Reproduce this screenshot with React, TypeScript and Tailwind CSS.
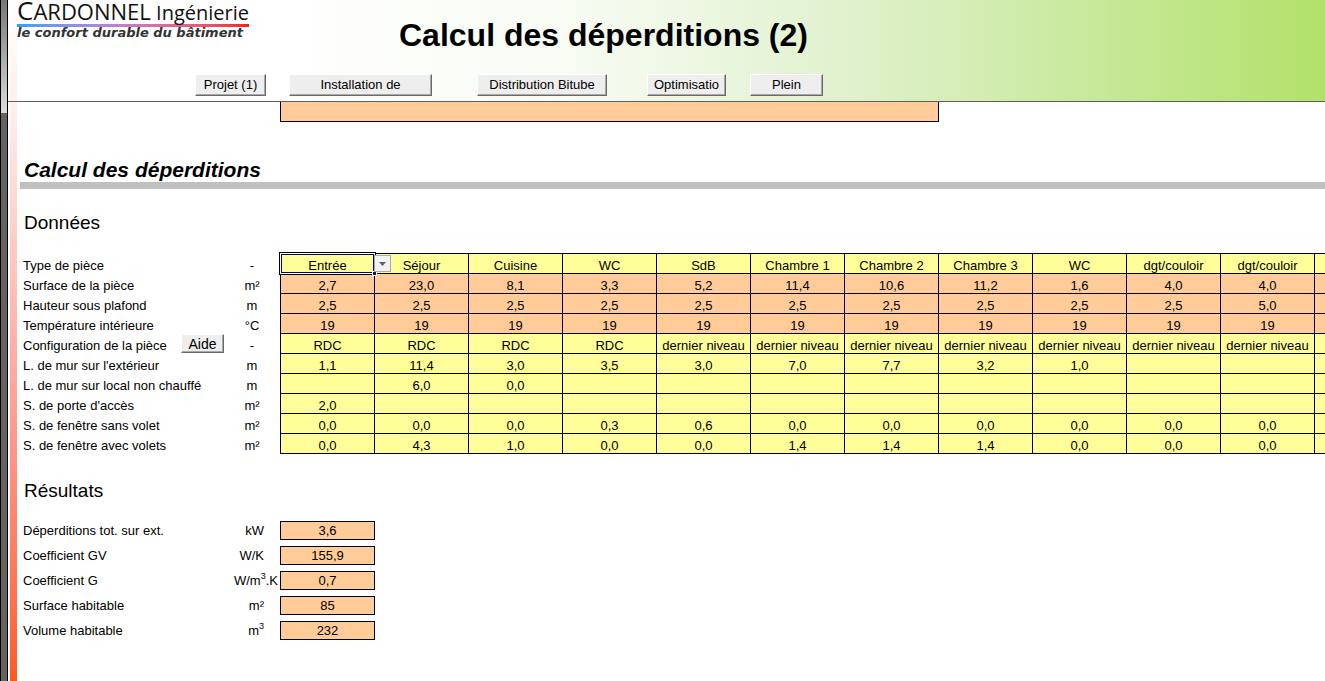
import React, { useState } from "react";

const roomTypes = [
  "Entrée",
  "Séjour",
  "Cuisine",
  "WC",
  "SdB",
  "Chambre 1",
  "Chambre 2",
  "Chambre 3",
  "WC",
  "dgt/couloir",
  "dgt/couloir",
  "",
];

const dn = "dernier niveau";

const rows = [
  {
    label: "Surface de la pièce",
    unit: "m²",
    computed: true,
    values: ["2,7", "23,0", "8,1", "3,3", "5,2", "11,4", "10,6", "11,2", "1,6", "4,0", "4,0", ""],
  },
  {
    label: "Hauteur sous plafond",
    unit: "m",
    computed: true,
    values: ["2,5", "2,5", "2,5", "2,5", "2,5", "2,5", "2,5", "2,5", "2,5", "2,5", "5,0", ""],
  },
  {
    label: "Température intérieure",
    unit: "°C",
    computed: true,
    values: ["19", "19", "19", "19", "19", "19", "19", "19", "19", "19", "19", ""],
  },
  {
    label: "Configuration de la pièce",
    unit: "-",
    help: true,
    values: ["RDC", "RDC", "RDC", "RDC", dn, dn, dn, dn, dn, dn, dn, ""],
  },
  {
    label: "L. de mur sur l'extérieur",
    unit: "m",
    values: ["1,1", "11,4", "3,0", "3,5", "3,0", "7,0", "7,7", "3,2", "1,0", "", "", ""],
  },
  {
    label: "L. de mur sur local non chauffé",
    unit: "m",
    values: ["", "6,0", "0,0", "", "", "", "", "", "", "", "", ""],
  },
  {
    label: "S. de porte d'accès",
    unit: "m²",
    values: ["2,0", "", "", "", "", "", "", "", "", "", "", ""],
  },
  {
    label: "S. de fenêtre sans volet",
    unit: "m²",
    values: ["0,0", "0,0", "0,0", "0,3", "0,6", "0,0", "0,0", "0,0", "0,0", "0,0", "0,0", ""],
  },
  {
    label: "S. de fenêtre avec volets",
    unit: "m²",
    values: ["0,0", "4,3", "1,0", "0,0", "0,0", "1,4", "1,4", "1,4", "0,0", "0,0", "0,0", ""],
  },
];

const results = [
  { label: "Déperditions tot. sur ext.", unit: "kW", value: "3,6" },
  { label: "Coefficient GV", unit: "W/K", value: "155,9" },
  { label: "Coefficient G", unit: <>W/m<Cube />.K</>, value: "0,7", wide: true },
  { label: "Surface habitable", unit: "m²", value: "85" },
  { label: "Volume habitable", unit: <>m<Cube /></>, value: "232" },
];

function Cube() {
  return <sup className="-top-1.5 text-[9px]">3</sup>;
}

const SheetButton = ({ className, children }: { className: string; children: React.ReactNode }) => (
  <button
    type="button"
    className={`border border-t-white border-l-white border-r-[#696969] border-b-[#696969] bg-[#eeeeee] whitespace-nowrap shadow-[inset_-1px_-1px_0_#a8a8a8] ${className}`}
  >
    {children}
  </button>
);

const Logo = () => (
  <div className="w-[232px] shrink-0">
    <div className="flex h-6 items-baseline justify-between font-['Open_Sans','Noto_Sans',sans-serif] text-[22px] leading-5 font-medium text-[#111]">
      <span>
        <span className="text-[26px] leading-5">C</span>ARDONNEL
      </span>
      <span className="text-[20px]">Ingénierie</span>
    </div>
    <div className="h-[3px] bg-linear-to-r from-[#1ea0ff] via-[#c878c8] to-[#ff1414]" />
    <p className="font-['DejaVu_Sans',sans-serif] text-[13px] leading-3 font-bold whitespace-nowrap text-[#333] italic">
      le confort durable du bâtiment
    </p>
  </div>
);

const Header = () => (
  <header className="flex h-[102px] border-b border-[#606060] bg-[linear-gradient(to_right,#ffffff_20%,#f8fcf4_42%,#e0f1cd_64%,#c8e99b_82%,#b2e16a_100%)]">
    <div className="ml-0.5 w-[7px] shrink-0 bg-linear-to-b from-white to-[#fff0ee]" />
    <div className="flex flex-col justify-between pb-[5px]">
      <div className="flex">
        <Logo />
        <h1 className="ml-[150px] pt-[17px] text-[32px] leading-9 font-bold whitespace-nowrap">
          Calcul des déperditions (2)
        </h1>
      </div>
      <nav className="ml-[178px] flex h-[22px]">
        <SheetButton className="w-[71px]">Projet (1)</SheetButton>
        <SheetButton className="ml-[23px] w-[143px]">Installation de</SheetButton>
        <SheetButton className="ml-[45px] w-[130px]">Distribution Bitube</SheetButton>
        <SheetButton className="ml-10 w-[79px]">Optimisatio</SheetButton>
        <SheetButton className="ml-6 w-[73px]">Plein</SheetButton>
      </nav>
    </div>
  </header>
);

const RoomSelect = () => {
  const [room, setRoom] = useState("Entrée");
  return (
    <>
      <select
        aria-label="Type de pièce"
        value={room}
        onChange={(e) => setRoom(e.target.value)}
        className="block h-[19px] w-full appearance-none pt-1 text-center leading-4 outline-none [text-align-last:center]"
      >
        <option>Entrée</option>
        <option>Séjour</option>
        <option>Cuisine</option>
        <option>WC</option>
        <option>SdB</option>
      </select>
      {/* active cell frame, fill handle and drop-down arrow */}
      <span className="pointer-events-none absolute -inset-0.5 border border-black">
        <span className="block h-full border border-white">
          <span className="block h-full border border-[#000080]" />
        </span>
      </span>
      <span className="pointer-events-none absolute -right-[3px] -bottom-[3px] size-[5px] border border-white bg-[#002060]" />
      <span className="pointer-events-none absolute top-px left-full flex size-[17px] items-center justify-center border border-[#a6a9b8] bg-[#f2f2f2]">
        <svg width="7" height="4" viewBox="0 0 7 4" fill="#606060">
          <path d="M0 0H7L3.5 4Z" />
        </svg>
      </span>
    </>
  );
};

const DataTable = () => (
  <table className="w-[1386px] table-fixed border-separate border-spacing-0 text-center">
    <colgroup>
      <col className="w-[201px]" />
      <col className="w-14" />
      <col className="w-[95px]" />
      {roomTypes.slice(1).map((_, i) => (
        <col key={i} className="w-[94px]" />
      ))}
    </colgroup>
    <thead>
      <tr className="h-[21px]">
        <th scope="row" className="p-0 pt-1 text-left leading-4 font-normal">
          Type de pièce
        </th>
        <td className="p-0 pt-1 leading-4">-</td>
        {roomTypes.map((type, i) => (
          <th
            key={i}
            scope="col"
            className="relative border-t border-r border-b border-black bg-[#ffff99] p-0 leading-4 font-normal nth-3:z-10 nth-3:border-l"
          >
            {i === 0 ? <RoomSelect /> : <div className="pt-1 leading-[15px]">{type}</div>}
          </th>
        ))}
      </tr>
    </thead>
    <tbody>
      {rows.map((row) => (
        <tr key={row.label} className="h-5">
          <th scope="row" className="p-0 pt-1 text-left leading-4 font-normal whitespace-nowrap">
            {row.help ? (
              <div className="relative">
                {row.label}
                <SheetButton className="absolute -top-1 left-[158px] h-[19px] w-[43px] text-sm leading-4">
                  Aide
                </SheetButton>
              </div>
            ) : (
              row.label
            )}
          </th>
          <td className="p-0 pt-1 leading-4">{row.unit}</td>
          {row.values.map((value, i) => (
            <td
              key={i}
              className={`border-r border-b border-black p-0 pt-1 leading-[15px] whitespace-nowrap nth-3:border-l ${
                row.computed ? "bg-[#ffcc99]" : "bg-[#ffff99]"
              }`}
            >
              {value}
            </td>
          ))}
        </tr>
      ))}
    </tbody>
  </table>
);

const ResultTable = () => (
  <table className="w-[352px] table-fixed border-separate border-spacing-0">
    <colgroup>
      <col className="w-[201px]" />
      <col className="w-14" />
      <col className="w-[95px]" />
    </colgroup>
    <tbody>
      {results.map((result) => (
        <tr key={result.label} className="h-[25px]">
          <th scope="row" className="p-0 text-left font-normal whitespace-nowrap">
            {result.label}
          </th>
          <td className={`p-0 text-right whitespace-nowrap ${result.wide ? "pr-0.5" : "pr-4"}`}>
            {result.unit}
          </td>
          <td className="p-0 text-center">
            <div className="h-[19px] border border-black bg-[#ffcc99] leading-[18px]">{result.value}</div>
          </td>
        </tr>
      ))}
    </tbody>
  </table>
);

const App = () => {
  return (
    <div className="flex min-h-screen overflow-hidden bg-white font-['Liberation_Sans',Arial,sans-serif] text-[13px] leading-4 text-black">
      {/* window edge */}
      <div className="flex w-2 shrink-0 flex-col border-r border-l border-black">
        <div className="h-[113px] bg-linear-to-b from-[#777] to-[#ddd]" />
        <div className="flex-1 bg-[#666262]" />
      </div>
      <div className="flex min-w-0 flex-1 flex-col">
        <Header />
        <div className="flex flex-1">
          <div className="ml-0.5 w-[7px] shrink-0 bg-linear-to-b from-[#fff0ee] via-[#ff9488] via-60% to-[#ff5a20]" />
          <main className="min-w-0 flex-1 overflow-hidden pl-[3px]">
            <div className="ml-[260px] h-5 w-[659px] border-r border-b border-l border-black bg-[#ffcc99]" />
            <h2 className="mt-9 pl-1 text-[21px] leading-6 font-bold italic">Calcul des déperditions</h2>
            <div className="h-[7px] bg-[#c0c0c0]" />
            <h3 className="mt-[22px] pl-1 text-[19px] leading-6">Données</h3>
            <div className="mt-[18px] pl-[3px]">
              <DataTable />
            </div>
            <h3 className="mt-[25px] pl-1 text-[19px] leading-6">Résultats</h3>
            <div className="mt-[15px] pl-[3px]">
              <ResultTable />
            </div>
          </main>
        </div>
      </div>
    </div>
  );
};

export default App;
